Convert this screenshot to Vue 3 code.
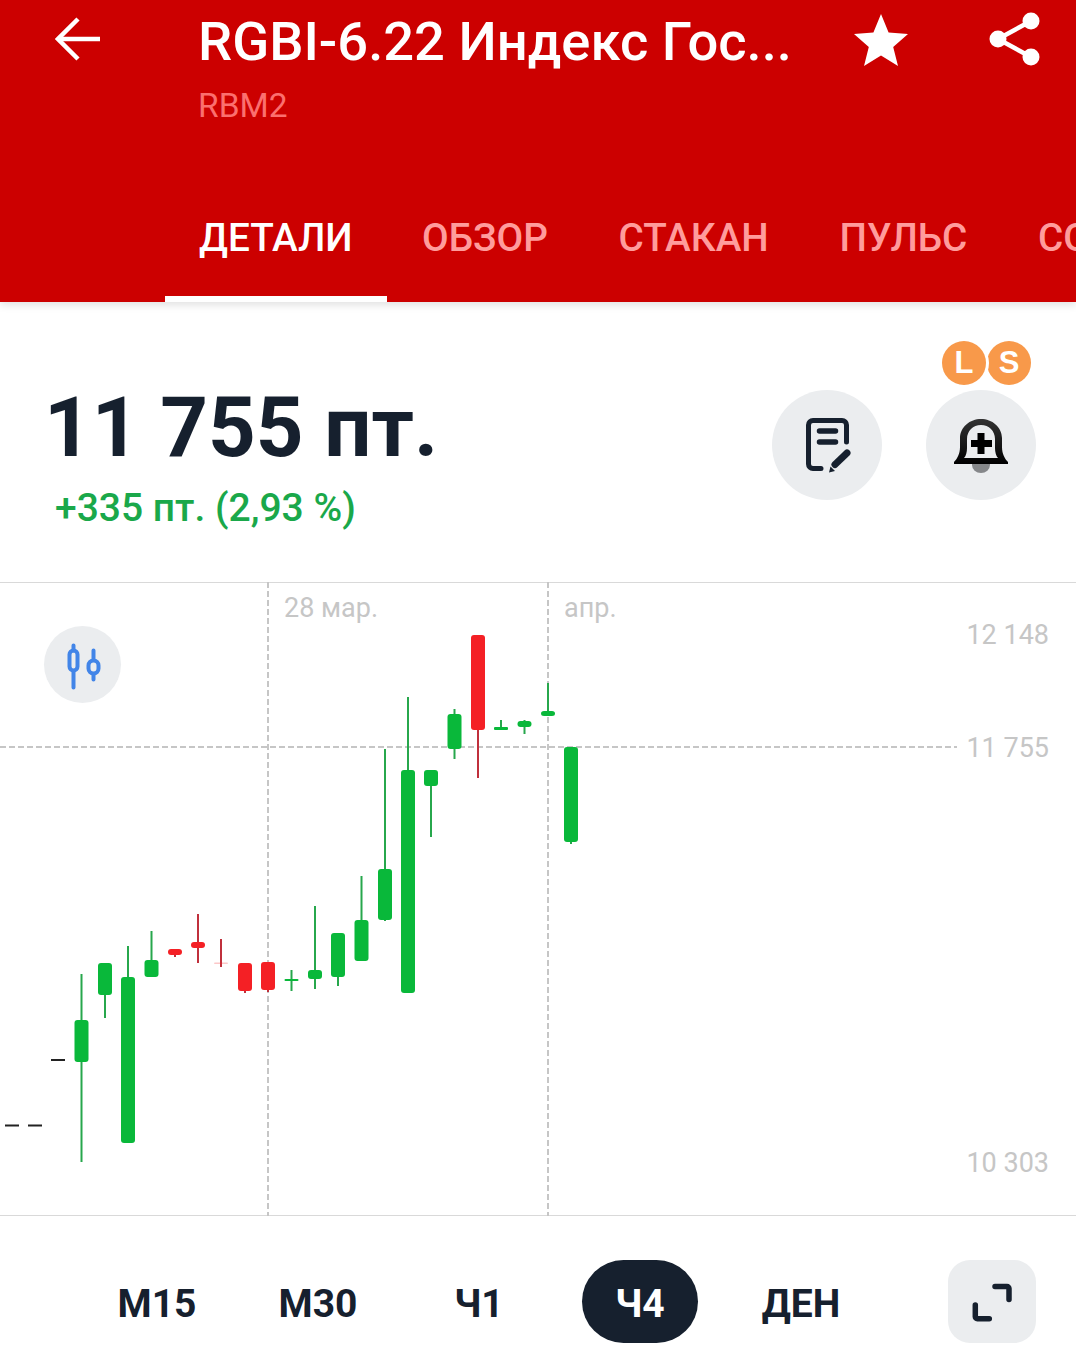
<template>
  <div class="screen">
    <header class="header">
      <div class="top-row">
        <button class="back" aria-label="Назад">
          <svg width="46" height="44" viewBox="0 0 46 44" fill="none" stroke="#fff" stroke-width="4.5">
            <path d="M45 22H4" />
            <path d="M23 2 3 22l20 20" />
          </svg>
        </button>
        <div class="titles">
          <div class="title">RGBI-6.22 Индекс Гос...</div>
          <div class="ticker">RBM2</div>
        </div>
        <svg class="star" width="54" height="52" viewBox="0 0 54 52" fill="#fff">
          <path d="M27 0l7.6 18.6 19.4 1.4-14.8 12.9L44 52 27 41.4 10 52l4.8-19.100L0 20l19.4-1.4z" />
        </svg>
        <svg class="share" width="52" height="54" viewBox="0 0 52 54" fill="#fff" stroke="#fff">
          <circle cx="42" cy="9" r="8.5" stroke="none" />
          <circle cx="9" cy="27" r="8.5" stroke="none" />
          <circle cx="42" cy="45" r="8.5" stroke="none" />
          <path d="M42 9 9 27l33 18" fill="none" stroke-width="4.5" />
        </svg>
      </div>
      <nav class="tabs">
        <div v-for="(tab, i) in tabs" :key="tab" class="tab" :class="{ active: i === 0 }">{{ tab }}</div>
      </nav>
    </header>

    <section class="quote">
      <div>
        <div class="price">11 755 пт.</div>
        <div class="change">+335 пт. (2,93 %)</div>
      </div>
      <div class="actions">
        <button class="round-btn" aria-label="Заметка">
          <svg width="48" height="56" viewBox="0 0 48 56" fill="none" stroke="#16202e" stroke-width="5" stroke-linecap="round">
            <path d="M18 51.500H10a4.500 4.500 0 0 1-4.500-4.500V8A4.500 4.500 0 0 1 10 3.500h29A4.500 4.500 0 0 1 43.500 8v17" />
            <path d="M16.500 14h16M16.500 25h16" stroke-width="5.500" />
            <path d="M32 47.500 44 36" stroke-width="7" />
            <path d="M26 55.500l1.500-6 4.500 4.500z" fill="#16202e" stroke="none" />
          </svg>
        </button>
        <button class="round-btn" aria-label="Оповещение">
          <svg width="56" height="56" viewBox="0 0 56 56">
            <defs>
              <linearGradient id="bellFill" x1="0" y1="0" x2="0" y2="1">
                <stop offset="0" stop-color="#333" />
                <stop offset="1" stop-color="#000" />
              </linearGradient>
            </defs>
            <path d="M19 47h18v1a9 8 0 0 1-18 0z" fill="#85878a" />
            <path
              fill-rule="evenodd"
              d="M28 2C17 2 7 10 7 21v9c0 7-3 12-6 15v2h54v-2c-3-3-6-8-6-15v-9C49 10 39 2 28 2zm0 6c-8 0-14 6-14 14v9c0 4-1 8-3 10h34c-2-2-3-6-3-10v-9C42 14 36 8 28 8z"
              fill="url(#bellFill)"
            />
            <path d="M28 16v21M18 26.500h21" stroke="#000" stroke-width="7" fill="none" />
          </svg>
          <span class="badge badge-l">L</span>
          <span class="badge badge-s">S</span>
        </button>
      </div>
    </section>

    <section class="chart">
      <svg class="plot" width="1076" height="634" viewBox="0 0 1076 634">
        <path d="M268 0V634M548 0V634" stroke="#c6c6c6" stroke-width="2" stroke-dasharray="6 3" fill="none" />
        <path d="M0 165H957" stroke="#c6c6c6" stroke-width="2" stroke-dasharray="6 3" fill="none" />
        <path d="M51 478H65M5 543.500H19M28 543.500H42" stroke="#222" stroke-width="2" fill="none" />
        <g v-for="c in candles" :key="c.x">
          <path :d="wickPath(c)" :stroke="c.up ? '#27a74c' : '#c0303c'" stroke-width="2" fill="none" />
          <rect
            :x="c.x - 7"
            :y="c.bodyTop - 582"
            width="14"
            :height="c.bodyBottom - c.bodyTop"
            :rx="c.bodyBottom - c.bodyTop < 5 ? 1 : 3"
            :fill="c.up ? '#09b83a' : '#f42025'"
            :opacity="c.faint ? 0.25 : 1"
          />
        </g>
      </svg>
      <span class="date-label date-first">28 мар.</span>
      <span class="date-label date-second">апр.</span>
      <span class="axis-label axis-high">12 148</span>
      <span class="axis-label axis-last">11 755</span>
      <span class="axis-label axis-low">10 303</span>
      <button class="chart-type" aria-label="Тип графика">
        <svg width="36" height="50" viewBox="0 0 36 50" fill="none" stroke="#4285e8" stroke-width="4" stroke-linecap="round">
          <path d="M8.500 5.500v5M8.500 32v15.500" />
          <rect x="4.500" y="10.500" width="8" height="20" rx="4" />
          <path d="M28.500 10.500v8M28.500 34v5.500" />
          <rect x="23.500" y="20.500" width="10" height="13" rx="5" />
        </svg>
      </button>
    </section>

    <footer class="periods">
      <div v-for="p in periods" :key="p" class="period" :class="{ active: p === 'Ч4' }">{{ p }}</div>
      <button class="expand" aria-label="Развернуть">
        <svg width="40" height="40" viewBox="0 0 40 40" fill="none" stroke="#16202e" stroke-width="5.500" stroke-linecap="round" stroke-linejoin="round">
          <path d="M23 4.500h12a2 2 0 0 1 2 2v11" />
          <path d="M3.300 23v11.700a2 2 0 0 0 2 2h12" />
        </svg>
      </button>
    </footer>
  </div>
</template>

<script setup>
const tabs = ['ДЕТАЛИ', 'ОБЗОР', 'СТАКАН', 'ПУЛЬС', 'СОБЫТИЯ']
const periods = ['М15', 'М30', 'Ч1', 'Ч4', 'ДЕН']

// y values are page pixels, top of the chart is 582
const candles = [
  { x: 81.5, high: 974, low: 1162, bodyTop: 1020, bodyBottom: 1062, up: true },
  { x: 105, high: 963, low: 1018, bodyTop: 963, bodyBottom: 995, up: true },
  { x: 128, high: 946, low: 1143, bodyTop: 977, bodyBottom: 1143, up: true },
  { x: 151.5, high: 931, low: 977, bodyTop: 960, bodyBottom: 977, up: true },
  { x: 175, high: 949, low: 957, bodyTop: 949, bodyBottom: 955, up: false },
  { x: 198, high: 914, low: 963, bodyTop: 942, bodyBottom: 948, up: false },
  { x: 221, high: 939, low: 967, bodyTop: 962.5, bodyBottom: 964, up: false, faint: true },
  { x: 245, high: 963, low: 993, bodyTop: 963, bodyBottom: 991, up: false },
  { x: 268, high: 962, low: 992, bodyTop: 962, bodyBottom: 990, up: false },
  { x: 291.5, high: 970, low: 991, bodyTop: 979, bodyBottom: 981, up: true },
  { x: 315, high: 906, low: 989, bodyTop: 970, bodyBottom: 979, up: true },
  { x: 338, high: 933, low: 986, bodyTop: 933, bodyBottom: 977, up: true },
  { x: 361.5, high: 876, low: 961, bodyTop: 920, bodyBottom: 961, up: true },
  { x: 385, high: 749, low: 921, bodyTop: 869, bodyBottom: 920, up: true },
  { x: 408, high: 697, low: 993, bodyTop: 770, bodyBottom: 993, up: true },
  { x: 431, high: 770, low: 837, bodyTop: 770, bodyBottom: 786, up: true },
  { x: 454.5, high: 709, low: 759, bodyTop: 714, bodyBottom: 749, up: true },
  { x: 478, high: 635, low: 778, bodyTop: 635, bodyBottom: 730, up: false },
  { x: 501, high: 720, low: 730, bodyTop: 727, bodyBottom: 730, up: true },
  { x: 524.5, high: 720, low: 734, bodyTop: 721, bodyBottom: 727, up: true },
  { x: 548, high: 683, low: 716, bodyTop: 711, bodyBottom: 716, up: true },
  { x: 571, high: 747, low: 844, bodyTop: 747, bodyBottom: 842, up: true }
]

function wickPath(c) {
  return `M${c.x} ${c.high - 582}V${c.low - 582}`
}
</script>

<style>
html,
body {
  margin: 0;
  background: #fff;
}
</style>

<style scoped>
.screen {
  width: 1076px;
  height: 1372px;
  overflow: hidden;
  background: #fff;
  font-family: Roboto, "Liberation Sans", sans-serif;
  color: #16202e;
}

button {
  border: 0;
  padding: 0;
  background: none;
}

.header {
  height: 302px;
  background: #cc0000;
  box-shadow: 0 3px 8px rgba(0, 0, 0, 0.12);
  position: relative;
  display: flex;
  flex-direction: column;
  justify-content: space-between;
}

.top-row {
  display: flex;
  align-items: flex-start;
  padding: 15px 35px 0 55px;
}

.back {
  width: 144px;
  margin-top: 2px;
  text-align: left;
  height: 44px;
}

.titles {
  flex: 1;
  min-width: 0;
}

.title {
  margin-left: -1px;
  font-size: 54.300px;
  line-height: 54px;
  font-weight: 500;
  color: #fff;
  white-space: nowrap;
}

.ticker {
  margin: 17px 0 0 -1px;
  font-size: 33.500px;
  line-height: 40px;
  color: #fb6f6f;
}

.star {
  margin: -1px 81px 0 0;
}

.share {
  margin-top: -3px;
}

.tabs {
  display: flex;
  padding-left: 165px;
  overflow: hidden;
}

.tab {
  flex: none;
  height: 92px;
  padding: 6px 35.400px 0;
  box-sizing: border-box;
  font-size: 38.700px;
  line-height: 44px;
  font-weight: 500;
  color: #ff9c9c;
}

.tab.active {
  color: #fff;
  border-bottom: 6px solid #fff;
  padding: 6px 34px 0;
}

.quote {
  height: 280px;
  box-sizing: border-box;
  display: flex;
  justify-content: space-between;
  padding: 84px 40px 0 44px;
}

.price {
  font-size: 83.300px;
  line-height: 84px;
  font-weight: 700;
  white-space: nowrap;
}

.change {
  margin: 16px 0 0 11px;
  font-size: 39px;
  line-height: 44px;
  font-weight: 500;
  color: #1aa84a;
}

.actions {
  display: flex;
  gap: 44px;
  padding-top: 4px;
}

.round-btn {
  width: 110px;
  height: 110px;
  border-radius: 50%;
  background: #ebedef;
  display: flex;
  align-items: center;
  justify-content: center;
  position: relative;
}

.badge {
  position: absolute;
  top: -49px;
  width: 44px;
  height: 44px;
  border-radius: 50%;
  background: #f8994a;
  color: #fff;
  font-size: 31px;
  line-height: 44px;
  font-weight: 700;
  text-align: center;
}

.badge-l {
  left: 16px;
  z-index: 1;
  box-shadow: 0 0 0 3px #fff;
}

.badge-s {
  left: 61px;
}

.chart {
  height: 634px;
  box-sizing: border-box;
  border-top: 1px solid #d9d9d9;
  border-bottom: 1px solid #d9d9d9;
  position: relative;
}

.plot {
  position: absolute;
  left: 0;
  top: -1px;
  display: block;
}

.date-label,
.axis-label {
  position: absolute;
  font-size: 27px;
  line-height: 32px;
  color: #c6c6c6;
  white-space: nowrap;
}

.date-label {
  top: 9px;
}

.date-first {
  left: 284px;
}

.date-second {
  left: 564px;
}

.axis-label {
  right: 27px;
}

.axis-high {
  top: 36px;
}

.axis-last {
  top: 149px;
}

.axis-low {
  top: 564px;
}

.chart-type {
  position: absolute;
  left: 44px;
  top: 43px;
  width: 77px;
  height: 77px;
  border-radius: 50%;
  background: #ebedef;
  display: flex;
  align-items: center;
  justify-content: center;
}

.periods {
  display: flex;
  gap: 45px;
  padding: 44px 40px 0 99px;
}

.period {
  width: 116px;
  height: 83px;
  border-radius: 42px;
  font-size: 39px;
  line-height: 88px;
  font-weight: 700;
  text-align: center;
}

.period.active {
  background: #16202e;
  color: #fff;
}

.expand {
  width: 88px;
  height: 83px;
  margin-left: auto;
  border-radius: 22px;
  background: #ebedef;
  display: flex;
  align-items: center;
  justify-content: center;
}
</style>
